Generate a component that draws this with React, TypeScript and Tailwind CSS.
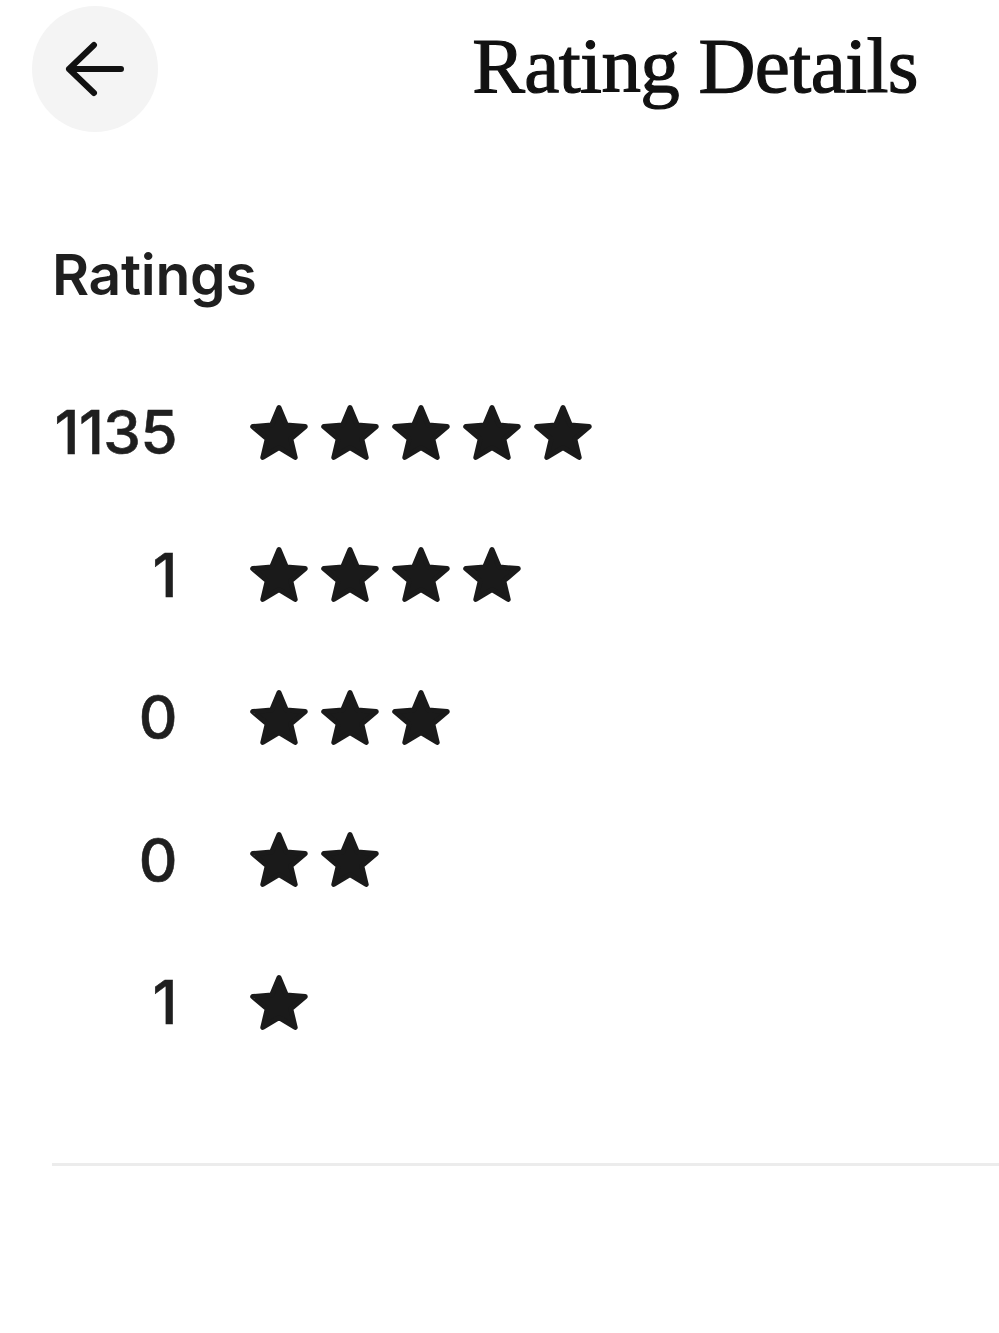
const counts = [
  { stars: 5, total: 1135 },
  { stars: 4, total: 1 },
  { stars: 3, total: 0 },
  { stars: 2, total: 0 },
  { stars: 1, total: 1 },
];

function Star() {
  return (
    <svg viewBox="1.5 1.6 21 20.1" className="h-[57px] w-[58px] shrink-0" fill="#1a1a1a">
      <polygon
        points="12,2.6 14.65,8.96 21.51,9.51 16.28,13.99 17.88,20.69 12,17.1 6.12,20.69 7.72,13.99 2.49,9.51 9.35,8.96"
        stroke="#1a1a1a"
        strokeWidth="1.8"
        strokeLinejoin="round"
      />
    </svg>
  );
}

function BackArrow() {
  return (
    <svg viewBox="0 0 62 56" className="h-[56px] w-[62px]" fill="none" stroke="#111" strokeWidth="6" strokeLinecap="round" strokeLinejoin="round">
      <path d="M30 4 L5 28 L30 52 M5 28 H57" />
    </svg>
  );
}

export default function App() {
  return (
    <div className="min-h-[1333px] w-full bg-white font-['Inter',sans-serif] text-[#1f1f1f]">
      <header className="flex h-[137px] items-center pl-8 pr-[81px]">
        <button className="flex h-[126px] w-[126px] items-center justify-center rounded-full bg-[#f4f4f4]">
          <BackArrow />
        </button>
        <h1 className="mb-[6px] ml-auto font-['Liberation_Serif',serif] text-[79px] leading-none tracking-[-0.6px] text-[#111] [-webkit-text-stroke:1.2px_#111]">
          Rating Details
        </h1>
      </header>

      <section className="pl-[52px]">
        <h2 className="mt-[109px] text-[57px] font-semibold leading-none tracking-[-0.3px]">Ratings</h2>

        <div className="mt-[58px] flex flex-col">
          {counts.map((row) => (
            <div key={row.stars} className="flex h-[142.5px] items-center">
              <span className="w-[125px] text-right text-[60px] font-medium leading-none tracking-[-0.5px] [-webkit-text-stroke:0.6px_#1f1f1f]">
                {row.total}
              </span>
              <div className="ml-[73px] flex gap-[13px]">
                {Array.from({ length: row.stars }).map((_, i) => (
                  <Star key={i} />
                ))}
              </div>
            </div>
          ))}
        </div>

        <div className="mt-[89px] h-[3px] bg-[#ececec]" />
      </section>
    </div>
  );
}
